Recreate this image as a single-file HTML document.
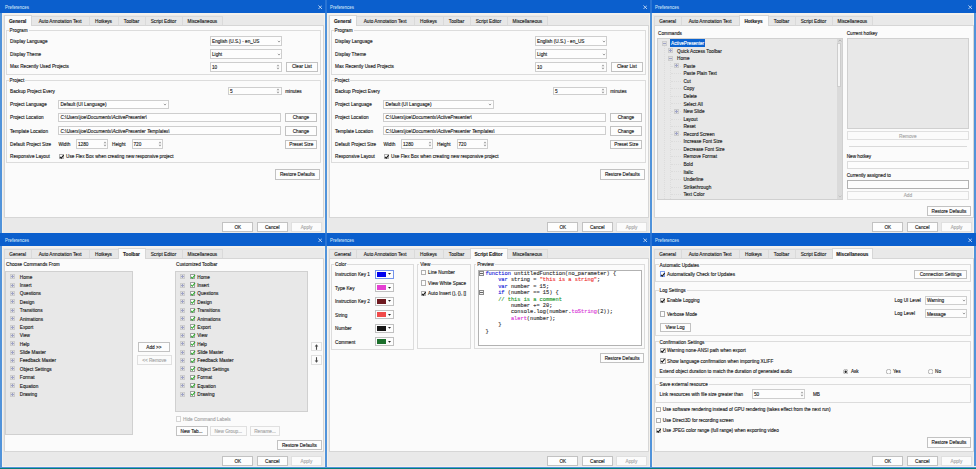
<!DOCTYPE html><html><head><meta charset="utf-8"><style>
html,body{margin:0;padding:0;width:976px;height:469px;overflow:hidden;background:#e9e9e9}
.a{position:absolute}
.t{position:absolute;white-space:nowrap;line-height:1;font-family:"Liberation Sans",sans-serif;-webkit-text-stroke:0.13px currentColor}
</style></head><body>
<div class="a" style="left:0px;top:0px;width:325px;height:233px;overflow:hidden;background:#e9e9e9">
<div class="a" style="left:0px;top:0px;width:2px;height:233px;background:#5193da;"></div>
<div class="a" style="left:2px;top:13px;width:1px;height:220px;background:#f4f1ec;"></div>
<div class="a" style="left:2px;top:13px;width:323px;height:2px;background:#f4f1ec;"></div>
<div class="a" style="left:324px;top:13px;width:1px;height:220px;background:#f4f1ec;"></div>
<div class="a" style="left:31px;top:16px;width:59px;height:10px;background:#e7e7e7;box-shadow:inset 0 0 0 1px #dadada;"></div>
<div class="t" style="top:19.66px;font-size:4.7px;color:#1e1e1e;left:10.149999999999999px;width:100px;text-align:center;">Auto Annotation Text</div>
<div class="a" style="left:89px;top:16px;width:30px;height:10px;background:#e7e7e7;box-shadow:inset 0 0 0 1px #dadada;"></div>
<div class="t" style="top:19.66px;font-size:4.7px;color:#1e1e1e;left:53.5px;width:100px;text-align:center;">Hotkeys</div>
<div class="a" style="left:118px;top:16px;width:28px;height:10px;background:#e7e7e7;box-shadow:inset 0 0 0 1px #dadada;"></div>
<div class="t" style="top:19.66px;font-size:4.7px;color:#1e1e1e;left:81.5px;width:100px;text-align:center;">Toolbar</div>
<div class="a" style="left:145px;top:16px;width:38px;height:10px;background:#e7e7e7;box-shadow:inset 0 0 0 1px #dadada;"></div>
<div class="t" style="top:19.66px;font-size:4.7px;color:#1e1e1e;left:113.5px;width:100px;text-align:center;">Script Editor</div>
<div class="a" style="left:182px;top:16px;width:41px;height:10px;background:#e7e7e7;box-shadow:inset 0 0 0 1px #dadada;"></div>
<div class="t" style="top:19.66px;font-size:4.7px;color:#1e1e1e;left:152.35px;width:100px;text-align:center;">Miscellaneous</div>
<div class="a" style="left:4px;top:25px;width:320px;height:193px;background:#fbfbfb;box-shadow:inset 0 0 0 1px #d6d6d6;"></div>
<div class="a" style="left:4px;top:15px;width:28px;height:11px;background:#fbfbfb;"></div>
<div class="a" style="left:4px;top:15px;width:27.8px;height:1px;background:#d6d6d6;"></div>
<div class="a" style="left:4px;top:15px;width:1px;height:11px;background:#d6d6d6;"></div>
<div class="a" style="left:30.8px;top:15px;width:1.0px;height:11px;background:#d6d6d6;"></div>
<div class="t" style="top:19.66px;font-size:4.7px;color:#1e1e1e;font-weight:bold;left:-32.35px;width:100px;text-align:center;">General</div>
<div class="a" style="left:222px;top:222px;width:31px;height:10px;background:#fdfdfd;box-shadow:inset 0 0 0 1px #c2c2c2;"></div>
<div class="t" style="top:225.76px;font-size:4.7px;color:#1e1e1e;left:187.8px;width:100px;text-align:center;">OK</div>
<div class="a" style="left:257px;top:222px;width:31px;height:10px;background:#fdfdfd;box-shadow:inset 0 0 0 1px #c2c2c2;"></div>
<div class="t" style="top:225.76px;font-size:4.7px;color:#1e1e1e;left:222.25px;width:100px;text-align:center;">Cancel</div>
<div class="a" style="left:291px;top:222px;width:31px;height:10px;background:#fbfbfb;box-shadow:inset 0 0 0 1px #e0e0e0;"></div>
<div class="t" style="top:225.76px;font-size:4.7px;color:#a8a8a8;left:256.6px;width:100px;text-align:center;">Apply</div>
<div class="a" style="left:0;top:0px;width:325px;height:233px">
<div class="a" style="left:6px;top:30px;width:315px;height:45px;box-shadow:inset 0 0 0 1px #dcdcdc;"></div>
<div class="t" style="left:8.6px;top:29.16px;font-size:4.7px;background:#fbfbfb;padding:0 1px;color:#1e1e1e">Program</div>
<div class="t" style="top:39.57px;font-size:4.7px;color:#1e1e1e;left:10px;">Display Language</div>
<div class="a" style="left:210px;top:36px;width:72px;height:10px;background:#fdfdfd;box-shadow:inset 0 0 0 1px #cecece;"></div>
<div class="t" style="top:39.66px;font-size:4.7px;color:#1e1e1e;left:212px;">English (U.S.) - en_US</div>
<svg class="a" style="left:276.6px;top:39.599999999999994px" width="4" height="3" viewBox="0 0 4 3"><path d="M0.9 0.8 L2 2.1 L3.1 0.8" stroke="#8c8c8c" stroke-width="0.8" fill="none"/></svg>
<div class="t" style="top:52.77px;font-size:4.7px;color:#1e1e1e;left:10px;">Display Theme</div>
<div class="a" style="left:210px;top:49px;width:72px;height:10px;background:#fdfdfd;box-shadow:inset 0 0 0 1px #cecece;"></div>
<div class="t" style="top:52.66px;font-size:4.7px;color:#1e1e1e;left:212px;">Light</div>
<svg class="a" style="left:276.6px;top:52.599999999999994px" width="4" height="3" viewBox="0 0 4 3"><path d="M0.9 0.8 L2 2.1 L3.1 0.8" stroke="#8c8c8c" stroke-width="0.8" fill="none"/></svg>
<div class="t" style="top:65.36px;font-size:4.7px;color:#1e1e1e;left:10px;">Max Recently Used Projects</div>
<div class="a" style="left:210px;top:62px;width:72px;height:10px;background:#fdfdfd;box-shadow:inset 0 0 0 1px #cecece;"></div>
<div class="t" style="top:65.62px;font-size:4.7px;color:#1e1e1e;left:212px;">10</div>
<svg class="a" style="left:276.4px;top:62.75px" width="4" height="8" viewBox="0 0 4 8"><path d="M0.6 3.3 L2 1.4 L3.4 3.3 Z M0.6 4.7 L2 6.6 L3.4 4.7 Z" fill="#9c9c9c"/></svg>
<div class="a" style="left:286px;top:62px;width:32px;height:10px;background:#fdfdfd;box-shadow:inset 0 0 0 1px #c2c2c2;"></div>
<div class="t" style="top:65.47px;font-size:4.7px;color:#1e1e1e;left:251.8px;width:100px;text-align:center;">Clear List</div>
<div class="a" style="left:6px;top:80px;width:315px;height:83px;box-shadow:inset 0 0 0 1px #dcdcdc;"></div>
<div class="t" style="left:8.6px;top:79.17px;font-size:4.7px;background:#fbfbfb;padding:0 1px;color:#1e1e1e">Project</div>
<div class="t" style="top:89.77px;font-size:4.7px;color:#1e1e1e;left:10px;">Backup Project Every</div>
<div class="a" style="left:228px;top:87px;width:54px;height:8px;background:#fdfdfd;box-shadow:inset 0 0 0 1px #cecece;"></div>
<div class="t" style="top:89.92px;font-size:4.7px;color:#1e1e1e;left:230px;">5</div>
<svg class="a" style="left:276.2px;top:87.05000000000001px" width="4" height="8" viewBox="0 0 4 8"><path d="M0.6 3.3 L2 1.4 L3.4 3.3 Z M0.6 4.7 L2 6.6 L3.4 4.7 Z" fill="#9c9c9c"/></svg>
<div class="t" style="top:89.87px;font-size:4.7px;color:#1e1e1e;left:285.2px;">minutes</div>
<div class="t" style="top:102.97px;font-size:4.7px;color:#1e1e1e;left:10px;">Project Language</div>
<div class="a" style="left:58px;top:100px;width:111px;height:9px;background:#fdfdfd;box-shadow:inset 0 0 0 1px #cecece;"></div>
<div class="t" style="top:103.07px;font-size:4.7px;color:#1e1e1e;left:60.4px;">Default (UI Language)</div>
<svg class="a" style="left:163.1px;top:103.0px" width="4" height="3" viewBox="0 0 4 3"><path d="M0.9 0.8 L2 2.1 L3.1 0.8" stroke="#8c8c8c" stroke-width="0.8" fill="none"/></svg>
<div class="t" style="top:116.17px;font-size:4.7px;color:#1e1e1e;left:10px;">Project Location</div>
<div class="a" style="left:58px;top:113px;width:223px;height:9px;background:#fdfdfd;box-shadow:inset 0 0 0 1px #cecece;"></div>
<div class="t" style="top:115.87px;font-size:4.7px;color:#1e1e1e;left:60.4px;font-style:italic">C:\Users\joe\Documents\ActivePresenter\</div>
<div class="a" style="left:285px;top:113px;width:32px;height:9px;background:#fdfdfd;box-shadow:inset 0 0 0 1px #c2c2c2;"></div>
<div class="t" style="top:116.06px;font-size:4.7px;color:#1e1e1e;left:250.95px;width:100px;text-align:center;">Change</div>
<div class="t" style="top:129.66px;font-size:4.7px;color:#1e1e1e;left:10px;">Template Location</div>
<div class="a" style="left:58px;top:126px;width:223px;height:9px;background:#fdfdfd;box-shadow:inset 0 0 0 1px #cecece;"></div>
<div class="t" style="top:129.76px;font-size:4.7px;color:#1e1e1e;left:60.4px;font-style:italic">C:\Users\joe\Documents\ActivePresenter Templates\</div>
<div class="a" style="left:285px;top:126px;width:32px;height:10px;background:#fdfdfd;box-shadow:inset 0 0 0 1px #c2c2c2;"></div>
<div class="t" style="top:129.71px;font-size:4.7px;color:#1e1e1e;left:250.95px;width:100px;text-align:center;">Change</div>
<div class="t" style="top:143.06px;font-size:4.7px;color:#1e1e1e;left:10px;">Default Project Size</div>
<div class="t" style="top:143.06px;font-size:4.7px;color:#1e1e1e;left:58.4px;">Width</div>
<div class="a" style="left:76px;top:139px;width:32px;height:10px;background:#fdfdfd;box-shadow:inset 0 0 0 1px #cecece;"></div>
<div class="t" style="top:143.01px;font-size:4.7px;color:#1e1e1e;left:78px;">1280</div>
<svg class="a" style="left:102.7px;top:140.15px" width="4" height="8" viewBox="0 0 4 8"><path d="M0.6 3.3 L2 1.4 L3.4 3.3 Z M0.6 4.7 L2 6.6 L3.4 4.7 Z" fill="#9c9c9c"/></svg>
<div class="t" style="top:143.06px;font-size:4.7px;color:#1e1e1e;left:112px;">Height</div>
<div class="a" style="left:132px;top:139px;width:31px;height:10px;background:#fdfdfd;box-shadow:inset 0 0 0 1px #cecece;"></div>
<div class="t" style="top:143.01px;font-size:4.7px;color:#1e1e1e;left:133.5px;">720</div>
<svg class="a" style="left:157.8px;top:140.15px" width="4" height="8" viewBox="0 0 4 8"><path d="M0.6 3.3 L2 1.4 L3.4 3.3 Z M0.6 4.7 L2 6.6 L3.4 4.7 Z" fill="#9c9c9c"/></svg>
<div class="a" style="left:285px;top:140px;width:32px;height:9px;background:#fdfdfd;box-shadow:inset 0 0 0 1px #c2c2c2;"></div>
<div class="t" style="top:143.36px;font-size:4.7px;color:#1e1e1e;left:251.25px;width:100px;text-align:center;">Preset Size</div>
<div class="t" style="top:155.26px;font-size:4.7px;color:#1e1e1e;left:10px;">Responsive Layout</div>
<div class="a" style="left:59px;top:154px;width:5px;height:5px;background:#fdfdfd;box-shadow:inset 0 0 0 1px #b0b0b0;"></div>
<svg class="a" style="left:58.6px;top:153.70000000000002px;overflow:visible" width="5.4" height="5.4" viewBox="0 0 10 10"><path d="M1.8 5.2 L4.2 7.8 L8.6 2.2" stroke="#1a1a1a" stroke-width="2.0" fill="none"/></svg>
<div class="t" style="top:155.26px;font-size:4.7px;color:#1e1e1e;left:66px;">Use Flex Box when creating new responsive project</div>
<div class="a" style="left:275px;top:169px;width:45px;height:11px;background:#fdfdfd;box-shadow:inset 0 0 0 1px #c2c2c2;"></div>
<div class="t" style="top:173.26px;font-size:4.7px;color:#1e1e1e;left:247.35000000000002px;width:100px;text-align:center;">Restore Defaults</div>
</div>
<div class="a" style="left:0px;top:0px;width:325px;height:13px;background:#0b5fcd;"></div>
<div class="t" style="top:6.00px;font-size:4.45px;color:#cfe1f7;left:5px;-webkit-text-stroke:0.05px currentColor">Preferences</div>
<svg class="a" style="left:317.5px;top:4.8px" width="4.5" height="4.5" viewBox="0 0 10 10"><path d="M1 1 L9 9 M9 1 L1 9" stroke="#e4edf9" stroke-width="1.7"/></svg>
</div>
<div class="a" style="left:325px;top:0px;width:325px;height:233px;overflow:hidden;background:#e9e9e9">
<div class="a" style="left:0px;top:0px;width:2px;height:233px;background:#5193da;"></div>
<div class="a" style="left:2px;top:13px;width:1px;height:220px;background:#f4f1ec;"></div>
<div class="a" style="left:2px;top:13px;width:323px;height:2px;background:#f4f1ec;"></div>
<div class="a" style="left:324px;top:13px;width:1px;height:220px;background:#f4f1ec;"></div>
<div class="a" style="left:31px;top:16px;width:59px;height:10px;background:#e7e7e7;box-shadow:inset 0 0 0 1px #dadada;"></div>
<div class="t" style="top:19.66px;font-size:4.7px;color:#1e1e1e;left:10.149999999999999px;width:100px;text-align:center;">Auto Annotation Text</div>
<div class="a" style="left:89px;top:16px;width:30px;height:10px;background:#e7e7e7;box-shadow:inset 0 0 0 1px #dadada;"></div>
<div class="t" style="top:19.66px;font-size:4.7px;color:#1e1e1e;left:53.5px;width:100px;text-align:center;">Hotkeys</div>
<div class="a" style="left:118px;top:16px;width:28px;height:10px;background:#e7e7e7;box-shadow:inset 0 0 0 1px #dadada;"></div>
<div class="t" style="top:19.66px;font-size:4.7px;color:#1e1e1e;left:81.5px;width:100px;text-align:center;">Toolbar</div>
<div class="a" style="left:145px;top:16px;width:38px;height:10px;background:#e7e7e7;box-shadow:inset 0 0 0 1px #dadada;"></div>
<div class="t" style="top:19.66px;font-size:4.7px;color:#1e1e1e;left:113.5px;width:100px;text-align:center;">Script Editor</div>
<div class="a" style="left:182px;top:16px;width:41px;height:10px;background:#e7e7e7;box-shadow:inset 0 0 0 1px #dadada;"></div>
<div class="t" style="top:19.66px;font-size:4.7px;color:#1e1e1e;left:152.35px;width:100px;text-align:center;">Miscellaneous</div>
<div class="a" style="left:4px;top:25px;width:320px;height:193px;background:#fbfbfb;box-shadow:inset 0 0 0 1px #d6d6d6;"></div>
<div class="a" style="left:4px;top:15px;width:28px;height:11px;background:#fbfbfb;"></div>
<div class="a" style="left:4px;top:15px;width:27.8px;height:1px;background:#d6d6d6;"></div>
<div class="a" style="left:4px;top:15px;width:1px;height:11px;background:#d6d6d6;"></div>
<div class="a" style="left:30.8px;top:15px;width:1.0px;height:11px;background:#d6d6d6;"></div>
<div class="t" style="top:19.66px;font-size:4.7px;color:#1e1e1e;font-weight:bold;left:-32.35px;width:100px;text-align:center;">General</div>
<div class="a" style="left:222px;top:222px;width:31px;height:10px;background:#fdfdfd;box-shadow:inset 0 0 0 1px #c2c2c2;"></div>
<div class="t" style="top:225.76px;font-size:4.7px;color:#1e1e1e;left:187.8px;width:100px;text-align:center;">OK</div>
<div class="a" style="left:257px;top:222px;width:31px;height:10px;background:#fdfdfd;box-shadow:inset 0 0 0 1px #c2c2c2;"></div>
<div class="t" style="top:225.76px;font-size:4.7px;color:#1e1e1e;left:222.25px;width:100px;text-align:center;">Cancel</div>
<div class="a" style="left:291px;top:222px;width:31px;height:10px;background:#fbfbfb;box-shadow:inset 0 0 0 1px #e0e0e0;"></div>
<div class="t" style="top:225.76px;font-size:4.7px;color:#a8a8a8;left:256.6px;width:100px;text-align:center;">Apply</div>
<div class="a" style="left:0;top:0px;width:325px;height:233px">
<div class="a" style="left:6px;top:30px;width:315px;height:45px;box-shadow:inset 0 0 0 1px #dcdcdc;"></div>
<div class="t" style="left:8.6px;top:29.16px;font-size:4.7px;background:#fbfbfb;padding:0 1px;color:#1e1e1e">Program</div>
<div class="t" style="top:39.57px;font-size:4.7px;color:#1e1e1e;left:10px;">Display Language</div>
<div class="a" style="left:210px;top:36px;width:72px;height:10px;background:#fdfdfd;box-shadow:inset 0 0 0 1px #cecece;"></div>
<div class="t" style="top:39.66px;font-size:4.7px;color:#1e1e1e;left:212px;">English (U.S.) - en_US</div>
<svg class="a" style="left:276.6px;top:39.599999999999994px" width="4" height="3" viewBox="0 0 4 3"><path d="M0.9 0.8 L2 2.1 L3.1 0.8" stroke="#8c8c8c" stroke-width="0.8" fill="none"/></svg>
<div class="t" style="top:52.77px;font-size:4.7px;color:#1e1e1e;left:10px;">Display Theme</div>
<div class="a" style="left:210px;top:49px;width:72px;height:10px;background:#fdfdfd;box-shadow:inset 0 0 0 1px #cecece;"></div>
<div class="t" style="top:52.66px;font-size:4.7px;color:#1e1e1e;left:212px;">Light</div>
<svg class="a" style="left:276.6px;top:52.599999999999994px" width="4" height="3" viewBox="0 0 4 3"><path d="M0.9 0.8 L2 2.1 L3.1 0.8" stroke="#8c8c8c" stroke-width="0.8" fill="none"/></svg>
<div class="t" style="top:65.36px;font-size:4.7px;color:#1e1e1e;left:10px;">Max Recently Used Projects</div>
<div class="a" style="left:210px;top:62px;width:72px;height:10px;background:#fdfdfd;box-shadow:inset 0 0 0 1px #cecece;"></div>
<div class="t" style="top:65.62px;font-size:4.7px;color:#1e1e1e;left:212px;">10</div>
<svg class="a" style="left:276.4px;top:62.75px" width="4" height="8" viewBox="0 0 4 8"><path d="M0.6 3.3 L2 1.4 L3.4 3.3 Z M0.6 4.7 L2 6.6 L3.4 4.7 Z" fill="#9c9c9c"/></svg>
<div class="a" style="left:286px;top:62px;width:32px;height:10px;background:#fdfdfd;box-shadow:inset 0 0 0 1px #c2c2c2;"></div>
<div class="t" style="top:65.47px;font-size:4.7px;color:#1e1e1e;left:251.8px;width:100px;text-align:center;">Clear List</div>
<div class="a" style="left:6px;top:80px;width:315px;height:83px;box-shadow:inset 0 0 0 1px #dcdcdc;"></div>
<div class="t" style="left:8.6px;top:79.17px;font-size:4.7px;background:#fbfbfb;padding:0 1px;color:#1e1e1e">Project</div>
<div class="t" style="top:89.77px;font-size:4.7px;color:#1e1e1e;left:10px;">Backup Project Every</div>
<div class="a" style="left:228px;top:87px;width:54px;height:8px;background:#fdfdfd;box-shadow:inset 0 0 0 1px #cecece;"></div>
<div class="t" style="top:89.92px;font-size:4.7px;color:#1e1e1e;left:230px;">5</div>
<svg class="a" style="left:276.2px;top:87.05000000000001px" width="4" height="8" viewBox="0 0 4 8"><path d="M0.6 3.3 L2 1.4 L3.4 3.3 Z M0.6 4.7 L2 6.6 L3.4 4.7 Z" fill="#9c9c9c"/></svg>
<div class="t" style="top:89.87px;font-size:4.7px;color:#1e1e1e;left:285.2px;">minutes</div>
<div class="t" style="top:102.97px;font-size:4.7px;color:#1e1e1e;left:10px;">Project Language</div>
<div class="a" style="left:58px;top:100px;width:111px;height:9px;background:#fdfdfd;box-shadow:inset 0 0 0 1px #cecece;"></div>
<div class="t" style="top:103.07px;font-size:4.7px;color:#1e1e1e;left:60.4px;">Default (UI Language)</div>
<svg class="a" style="left:163.1px;top:103.0px" width="4" height="3" viewBox="0 0 4 3"><path d="M0.9 0.8 L2 2.1 L3.1 0.8" stroke="#8c8c8c" stroke-width="0.8" fill="none"/></svg>
<div class="t" style="top:116.17px;font-size:4.7px;color:#1e1e1e;left:10px;">Project Location</div>
<div class="a" style="left:58px;top:113px;width:223px;height:9px;background:#fdfdfd;box-shadow:inset 0 0 0 1px #cecece;"></div>
<div class="t" style="top:115.87px;font-size:4.7px;color:#1e1e1e;left:60.4px;font-style:italic">C:\Users\joe\Documents\ActivePresenter\</div>
<div class="a" style="left:285px;top:113px;width:32px;height:9px;background:#fdfdfd;box-shadow:inset 0 0 0 1px #c2c2c2;"></div>
<div class="t" style="top:116.06px;font-size:4.7px;color:#1e1e1e;left:250.95px;width:100px;text-align:center;">Change</div>
<div class="t" style="top:129.66px;font-size:4.7px;color:#1e1e1e;left:10px;">Template Location</div>
<div class="a" style="left:58px;top:126px;width:223px;height:9px;background:#fdfdfd;box-shadow:inset 0 0 0 1px #cecece;"></div>
<div class="t" style="top:129.76px;font-size:4.7px;color:#1e1e1e;left:60.4px;font-style:italic">C:\Users\joe\Documents\ActivePresenter Templates\</div>
<div class="a" style="left:285px;top:126px;width:32px;height:10px;background:#fdfdfd;box-shadow:inset 0 0 0 1px #c2c2c2;"></div>
<div class="t" style="top:129.71px;font-size:4.7px;color:#1e1e1e;left:250.95px;width:100px;text-align:center;">Change</div>
<div class="t" style="top:143.06px;font-size:4.7px;color:#1e1e1e;left:10px;">Default Project Size</div>
<div class="t" style="top:143.06px;font-size:4.7px;color:#1e1e1e;left:58.4px;">Width</div>
<div class="a" style="left:76px;top:139px;width:32px;height:10px;background:#fdfdfd;box-shadow:inset 0 0 0 1px #cecece;"></div>
<div class="t" style="top:143.01px;font-size:4.7px;color:#1e1e1e;left:78px;">1280</div>
<svg class="a" style="left:102.7px;top:140.15px" width="4" height="8" viewBox="0 0 4 8"><path d="M0.6 3.3 L2 1.4 L3.4 3.3 Z M0.6 4.7 L2 6.6 L3.4 4.7 Z" fill="#9c9c9c"/></svg>
<div class="t" style="top:143.06px;font-size:4.7px;color:#1e1e1e;left:112px;">Height</div>
<div class="a" style="left:132px;top:139px;width:31px;height:10px;background:#fdfdfd;box-shadow:inset 0 0 0 1px #cecece;"></div>
<div class="t" style="top:143.01px;font-size:4.7px;color:#1e1e1e;left:133.5px;">720</div>
<svg class="a" style="left:157.8px;top:140.15px" width="4" height="8" viewBox="0 0 4 8"><path d="M0.6 3.3 L2 1.4 L3.4 3.3 Z M0.6 4.7 L2 6.6 L3.4 4.7 Z" fill="#9c9c9c"/></svg>
<div class="a" style="left:285px;top:140px;width:32px;height:9px;background:#fdfdfd;box-shadow:inset 0 0 0 1px #c2c2c2;"></div>
<div class="t" style="top:143.36px;font-size:4.7px;color:#1e1e1e;left:251.25px;width:100px;text-align:center;">Preset Size</div>
<div class="t" style="top:155.26px;font-size:4.7px;color:#1e1e1e;left:10px;">Responsive Layout</div>
<div class="a" style="left:59px;top:154px;width:5px;height:5px;background:#fdfdfd;box-shadow:inset 0 0 0 1px #b0b0b0;"></div>
<svg class="a" style="left:58.6px;top:153.70000000000002px;overflow:visible" width="5.4" height="5.4" viewBox="0 0 10 10"><path d="M1.8 5.2 L4.2 7.8 L8.6 2.2" stroke="#1a1a1a" stroke-width="2.0" fill="none"/></svg>
<div class="t" style="top:155.26px;font-size:4.7px;color:#1e1e1e;left:66px;">Use Flex Box when creating new responsive project</div>
<div class="a" style="left:275px;top:169px;width:45px;height:11px;background:#fdfdfd;box-shadow:inset 0 0 0 1px #c2c2c2;"></div>
<div class="t" style="top:173.26px;font-size:4.7px;color:#1e1e1e;left:247.35000000000002px;width:100px;text-align:center;">Restore Defaults</div>
</div>
<div class="a" style="left:0px;top:0px;width:325px;height:13px;background:#0b5fcd;"></div>
<div class="a" style="left:0px;top:0px;width:2px;height:13px;background:#2a74d4;"></div>
<div class="t" style="top:6.00px;font-size:4.45px;color:#cfe1f7;left:5px;-webkit-text-stroke:0.05px currentColor">Preferences</div>
<svg class="a" style="left:317.5px;top:4.8px" width="4.5" height="4.5" viewBox="0 0 10 10"><path d="M1 1 L9 9 M9 1 L1 9" stroke="#e4edf9" stroke-width="1.7"/></svg>
</div>
<div class="a" style="left:650px;top:0px;width:326px;height:233px;overflow:hidden;background:#e9e9e9">
<div class="a" style="left:0px;top:0px;width:2px;height:233px;background:#5193da;"></div>
<div class="a" style="left:2px;top:13px;width:1px;height:220px;background:#f4f1ec;"></div>
<div class="a" style="left:2px;top:13px;width:324px;height:2px;background:#f4f1ec;"></div>
<div class="a" style="left:325px;top:13px;width:1px;height:220px;background:#f4f1ec;"></div>
<div class="a" style="left:324px;top:0px;width:2px;height:233px;background:#5193da;"></div>
<div class="a" style="left:323px;top:13px;width:1px;height:220px;background:#f4f1ec;"></div>
<div class="a" style="left:4px;top:16px;width:28px;height:10px;background:#e7e7e7;box-shadow:inset 0 0 0 1px #dadada;"></div>
<div class="t" style="top:19.66px;font-size:4.7px;color:#1e1e1e;left:-32.35px;width:100px;text-align:center;">General</div>
<div class="a" style="left:31px;top:16px;width:59px;height:10px;background:#e7e7e7;box-shadow:inset 0 0 0 1px #dadada;"></div>
<div class="t" style="top:19.66px;font-size:4.7px;color:#1e1e1e;left:10.149999999999999px;width:100px;text-align:center;">Auto Annotation Text</div>
<div class="a" style="left:118px;top:16px;width:28px;height:10px;background:#e7e7e7;box-shadow:inset 0 0 0 1px #dadada;"></div>
<div class="t" style="top:19.66px;font-size:4.7px;color:#1e1e1e;left:81.5px;width:100px;text-align:center;">Toolbar</div>
<div class="a" style="left:145px;top:16px;width:38px;height:10px;background:#e7e7e7;box-shadow:inset 0 0 0 1px #dadada;"></div>
<div class="t" style="top:19.66px;font-size:4.7px;color:#1e1e1e;left:113.5px;width:100px;text-align:center;">Script Editor</div>
<div class="a" style="left:182px;top:16px;width:41px;height:10px;background:#e7e7e7;box-shadow:inset 0 0 0 1px #dadada;"></div>
<div class="t" style="top:19.66px;font-size:4.7px;color:#1e1e1e;left:152.35px;width:100px;text-align:center;">Miscellaneous</div>
<div class="a" style="left:4px;top:25px;width:320px;height:193px;background:#fbfbfb;box-shadow:inset 0 0 0 1px #d6d6d6;"></div>
<div class="a" style="left:89px;top:15px;width:30px;height:11px;background:#fbfbfb;"></div>
<div class="a" style="left:89px;top:15px;width:29.5px;height:1px;background:#d6d6d6;"></div>
<div class="a" style="left:89px;top:15px;width:1px;height:11px;background:#d6d6d6;"></div>
<div class="a" style="left:117.5px;top:15px;width:1.0px;height:11px;background:#d6d6d6;"></div>
<div class="t" style="top:19.66px;font-size:4.7px;color:#1e1e1e;font-weight:bold;left:53.5px;width:100px;text-align:center;">Hotkeys</div>
<div class="a" style="left:222px;top:222px;width:31px;height:10px;background:#fdfdfd;box-shadow:inset 0 0 0 1px #c2c2c2;"></div>
<div class="t" style="top:225.76px;font-size:4.7px;color:#1e1e1e;left:187.8px;width:100px;text-align:center;">OK</div>
<div class="a" style="left:257px;top:222px;width:31px;height:10px;background:#fdfdfd;box-shadow:inset 0 0 0 1px #c2c2c2;"></div>
<div class="t" style="top:225.76px;font-size:4.7px;color:#1e1e1e;left:222.25px;width:100px;text-align:center;">Cancel</div>
<div class="a" style="left:291px;top:222px;width:31px;height:10px;background:#fbfbfb;box-shadow:inset 0 0 0 1px #e0e0e0;"></div>
<div class="t" style="top:225.76px;font-size:4.7px;color:#a8a8a8;left:256.6px;width:100px;text-align:center;">Apply</div>
<div class="a" style="left:0;top:0px;width:326px;height:233px">
<div class="t" style="top:31.66px;font-size:4.7px;color:#1e1e1e;left:8px;">Commands</div>
<div class="a" style="left:7px;top:38px;width:186px;height:162px;background:#e8e8e8;box-shadow:inset 0 0 0 1px #d0d0d0;"></div>
<div class="a" style="left:14px;top:45px;width:0;height:154px;border-left:1px dotted #dcdcdc"></div>
<div class="a" style="left:20px;top:60px;width:0;height:139px;border-left:1px dotted #dcdcdc"></div>
<div class="a" style="left:21px;top:66px;width:10px;height:0;border-top:1px dotted #dcdcdc"></div>
<div class="a" style="left:21px;top:73px;width:10px;height:0;border-top:1px dotted #dcdcdc"></div>
<div class="a" style="left:21px;top:81px;width:10px;height:0;border-top:1px dotted #dcdcdc"></div>
<div class="a" style="left:21px;top:88px;width:10px;height:0;border-top:1px dotted #dcdcdc"></div>
<div class="a" style="left:21px;top:96px;width:10px;height:0;border-top:1px dotted #dcdcdc"></div>
<div class="a" style="left:21px;top:103px;width:10px;height:0;border-top:1px dotted #dcdcdc"></div>
<div class="a" style="left:21px;top:111px;width:10px;height:0;border-top:1px dotted #dcdcdc"></div>
<div class="a" style="left:21px;top:119px;width:10px;height:0;border-top:1px dotted #dcdcdc"></div>
<div class="a" style="left:21px;top:126px;width:10px;height:0;border-top:1px dotted #dcdcdc"></div>
<div class="a" style="left:21px;top:134px;width:10px;height:0;border-top:1px dotted #dcdcdc"></div>
<div class="a" style="left:21px;top:141px;width:10px;height:0;border-top:1px dotted #dcdcdc"></div>
<div class="a" style="left:21px;top:149px;width:10px;height:0;border-top:1px dotted #dcdcdc"></div>
<div class="a" style="left:21px;top:156px;width:10px;height:0;border-top:1px dotted #dcdcdc"></div>
<div class="a" style="left:21px;top:164px;width:10px;height:0;border-top:1px dotted #dcdcdc"></div>
<div class="a" style="left:21px;top:171px;width:10px;height:0;border-top:1px dotted #dcdcdc"></div>
<div class="a" style="left:21px;top:179px;width:10px;height:0;border-top:1px dotted #dcdcdc"></div>
<div class="a" style="left:21px;top:187px;width:10px;height:0;border-top:1px dotted #dcdcdc"></div>
<div class="a" style="left:21px;top:194px;width:10px;height:0;border-top:1px dotted #dcdcdc"></div>
<div class="a" style="left:187px;top:39px;width:5px;height:160px;background:#dadada;"></div>
<div class="a" style="left:187px;top:43px;width:4px;height:44px;background:#f6f6f6;box-shadow:inset 0 0 0 1px #cdcdcd;"></div>
<svg class="a" style="left:187.5px;top:39px" width="4" height="3" viewBox="0 0 4 3"><path d="M0.6 2.4 L2 0.9 L3.4 2.4" stroke="#9a9a9a" stroke-width="0.6" fill="none"/></svg>
<svg class="a" style="left:187.5px;top:195px" width="4" height="3" viewBox="0 0 4 3"><path d="M0.6 0.6 L2 2.1 L3.4 0.6" stroke="#b0b0b0" stroke-width="0.6" fill="none"/></svg>
<div class="a" style="left:12px;top:41px;width:5px;height:5px;background:#e0e0e0;box-shadow:inset 0 0 0 1px #cdcdcd"></div>
<div class="a" style="left:13px;top:43px;width:3px;height:1px;background:#9fa3c6"></div>
<div class="a" style="left:20px;top:39px;width:35px;height:8px;background:#0b63d0;"></div>
<div class="t" style="top:42.07px;font-size:4.7px;color:#ffffff;left:21.1px;">ActivePresenter</div>
<div class="a" style="left:18px;top:48px;width:5px;height:5px;background:#e0e0e0;box-shadow:inset 0 0 0 1px #cdcdcd"></div>
<div class="a" style="left:19px;top:50px;width:3px;height:1px;background:#9fa3c6"></div>
<div class="a" style="left:20px;top:49px;width:1px;height:3px;background:#9fa3c6"></div>
<div class="t" style="top:49.63px;font-size:4.7px;color:#1e1e1e;left:27.0px;">Quick Access Toolbar</div>
<div class="a" style="left:18px;top:56px;width:5px;height:5px;background:#e0e0e0;box-shadow:inset 0 0 0 1px #cdcdcd"></div>
<div class="a" style="left:19px;top:58px;width:3px;height:1px;background:#9fa3c6"></div>
<div class="t" style="top:57.19px;font-size:4.7px;color:#1e1e1e;left:27.0px;">Home</div>
<div class="a" style="left:24px;top:63px;width:5px;height:5px;background:#e0e0e0;box-shadow:inset 0 0 0 1px #cdcdcd"></div>
<div class="a" style="left:25px;top:65px;width:3px;height:1px;background:#9fa3c6"></div>
<div class="a" style="left:26px;top:64px;width:1px;height:3px;background:#9fa3c6"></div>
<div class="t" style="top:64.74px;font-size:4.7px;color:#1e1e1e;left:33.400000000000006px;">Paste</div>
<div class="t" style="top:72.31px;font-size:4.7px;color:#1e1e1e;left:33.400000000000006px;">Paste Plain Text</div>
<div class="t" style="top:79.87px;font-size:4.7px;color:#1e1e1e;left:33.400000000000006px;">Cut</div>
<div class="t" style="top:87.43px;font-size:4.7px;color:#1e1e1e;left:33.400000000000006px;">Copy</div>
<div class="t" style="top:94.99px;font-size:4.7px;color:#1e1e1e;left:33.400000000000006px;">Delete</div>
<div class="t" style="top:102.55px;font-size:4.7px;color:#1e1e1e;left:33.400000000000006px;">Select All</div>
<div class="a" style="left:24px;top:109px;width:5px;height:5px;background:#e0e0e0;box-shadow:inset 0 0 0 1px #cdcdcd"></div>
<div class="a" style="left:25px;top:111px;width:3px;height:1px;background:#9fa3c6"></div>
<div class="a" style="left:26px;top:110px;width:1px;height:3px;background:#9fa3c6"></div>
<div class="t" style="top:110.11px;font-size:4.7px;color:#1e1e1e;left:33.400000000000006px;">New Slide</div>
<div class="t" style="top:117.67px;font-size:4.7px;color:#1e1e1e;left:33.400000000000006px;">Layout</div>
<div class="t" style="top:125.23px;font-size:4.7px;color:#1e1e1e;left:33.400000000000006px;">Reset</div>
<div class="a" style="left:24px;top:131px;width:5px;height:5px;background:#e0e0e0;box-shadow:inset 0 0 0 1px #cdcdcd"></div>
<div class="a" style="left:25px;top:133px;width:3px;height:1px;background:#9fa3c6"></div>
<div class="a" style="left:26px;top:132px;width:1px;height:3px;background:#9fa3c6"></div>
<div class="t" style="top:132.78px;font-size:4.7px;color:#1e1e1e;left:33.400000000000006px;">Record Screen</div>
<div class="t" style="top:140.34px;font-size:4.7px;color:#1e1e1e;left:33.400000000000006px;">Increase Font Size</div>
<div class="t" style="top:147.90px;font-size:4.7px;color:#1e1e1e;left:33.400000000000006px;">Decrease Font Size</div>
<div class="t" style="top:155.46px;font-size:4.7px;color:#1e1e1e;left:33.400000000000006px;">Remove Format</div>
<div class="t" style="top:163.02px;font-size:4.7px;color:#1e1e1e;left:33.400000000000006px;">Bold</div>
<div class="t" style="top:170.58px;font-size:4.7px;color:#1e1e1e;left:33.400000000000006px;">Italic</div>
<div class="t" style="top:178.14px;font-size:4.7px;color:#1e1e1e;left:33.400000000000006px;">Underline</div>
<div class="t" style="top:185.70px;font-size:4.7px;color:#1e1e1e;left:33.400000000000006px;">Strikethrough</div>
<div class="t" style="top:193.26px;font-size:4.7px;color:#1e1e1e;left:33.400000000000006px;">Text Color</div>
<div class="t" style="top:31.66px;font-size:4.7px;color:#1e1e1e;left:196.7px;">Current hotkey</div>
<div class="a" style="left:197px;top:38px;width:122px;height:91px;background:#e8e8e8;box-shadow:inset 0 0 0 1px #d0d0d0;"></div>
<div class="a" style="left:197px;top:131px;width:122px;height:9px;background:#fbfbfb;box-shadow:inset 0 0 0 1px #e0e0e0;"></div>
<div class="t" style="top:134.56px;font-size:4.7px;color:#a8a8a8;left:207.85000000000002px;width:100px;text-align:center;">Remove</div>
<div class="a" style="left:198.6px;top:146px;width:118.4px;height:1px;background:#dadada;"></div>
<div class="t" style="top:155.16px;font-size:4.7px;color:#1e1e1e;left:196.7px;">New hotkey</div>
<div class="a" style="left:197px;top:161px;width:122px;height:8px;background:#fdfdfd;box-shadow:inset 0 0 0 1px #dcdcdc;"></div>
<div class="t" style="top:173.96px;font-size:4.7px;color:#1e1e1e;left:196.7px;">Currently assigned to</div>
<div class="a" style="left:197px;top:180px;width:122px;height:9px;background:#fdfdfd;box-shadow:inset 0 0 0 1px #b2b2b2;"></div>
<div class="a" style="left:197px;top:191px;width:122px;height:9px;background:#fbfbfb;box-shadow:inset 0 0 0 1px #e0e0e0;"></div>
<div class="t" style="top:194.11px;font-size:4.7px;color:#a8a8a8;left:207.85000000000002px;width:100px;text-align:center;">Add</div>
<div class="a" style="left:277px;top:206px;width:44px;height:10px;background:#fdfdfd;box-shadow:inset 0 0 0 1px #c2c2c2;"></div>
<div class="t" style="top:209.86px;font-size:4.7px;color:#1e1e1e;left:249.0px;width:100px;text-align:center;">Restore Defaults</div>
</div>
<div class="a" style="left:0px;top:0px;width:326px;height:13px;background:#0b5fcd;"></div>
<div class="a" style="left:0px;top:0px;width:2px;height:13px;background:#2a74d4;"></div>
<div class="t" style="top:6.00px;font-size:4.45px;color:#cfe1f7;left:5px;-webkit-text-stroke:0.05px currentColor">Preferences</div>
<svg class="a" style="left:317.5px;top:4.8px" width="4.5" height="4.5" viewBox="0 0 10 10"><path d="M1 1 L9 9 M9 1 L1 9" stroke="#e4edf9" stroke-width="1.7"/></svg>
</div>
<div class="a" style="left:0px;top:233px;width:325px;height:236px;overflow:hidden;background:#e9e9e9">
<div class="a" style="left:0px;top:0px;width:2px;height:236px;background:#5193da;"></div>
<div class="a" style="left:2px;top:13px;width:1px;height:223px;background:#f4f1ec;"></div>
<div class="a" style="left:2px;top:13px;width:323px;height:2px;background:#f4f1ec;"></div>
<div class="a" style="left:324px;top:13px;width:1px;height:223px;background:#f4f1ec;"></div>
<div class="a" style="left:2px;top:233px;width:323px;height:1px;background:#f4f1ec;"></div>
<div class="a" style="left:4px;top:16px;width:28px;height:10px;background:#e7e7e7;box-shadow:inset 0 0 0 1px #dadada;"></div>
<div class="t" style="top:19.66px;font-size:4.7px;color:#1e1e1e;left:-32.35px;width:100px;text-align:center;">General</div>
<div class="a" style="left:31px;top:16px;width:59px;height:10px;background:#e7e7e7;box-shadow:inset 0 0 0 1px #dadada;"></div>
<div class="t" style="top:19.66px;font-size:4.7px;color:#1e1e1e;left:10.149999999999999px;width:100px;text-align:center;">Auto Annotation Text</div>
<div class="a" style="left:89px;top:16px;width:30px;height:10px;background:#e7e7e7;box-shadow:inset 0 0 0 1px #dadada;"></div>
<div class="t" style="top:19.66px;font-size:4.7px;color:#1e1e1e;left:53.5px;width:100px;text-align:center;">Hotkeys</div>
<div class="a" style="left:145px;top:16px;width:38px;height:10px;background:#e7e7e7;box-shadow:inset 0 0 0 1px #dadada;"></div>
<div class="t" style="top:19.66px;font-size:4.7px;color:#1e1e1e;left:113.5px;width:100px;text-align:center;">Script Editor</div>
<div class="a" style="left:182px;top:16px;width:41px;height:10px;background:#e7e7e7;box-shadow:inset 0 0 0 1px #dadada;"></div>
<div class="t" style="top:19.66px;font-size:4.7px;color:#1e1e1e;left:152.35px;width:100px;text-align:center;">Miscellaneous</div>
<div class="a" style="left:4px;top:25px;width:320px;height:194px;background:#fbfbfb;box-shadow:inset 0 0 0 1px #d6d6d6;"></div>
<div class="a" style="left:118px;top:15px;width:28px;height:11px;background:#fbfbfb;"></div>
<div class="a" style="left:118px;top:15px;width:27.5px;height:1px;background:#d6d6d6;"></div>
<div class="a" style="left:118px;top:15px;width:1px;height:11px;background:#d6d6d6;"></div>
<div class="a" style="left:144.5px;top:15px;width:1.0px;height:11px;background:#d6d6d6;"></div>
<div class="t" style="top:19.66px;font-size:4.7px;color:#1e1e1e;font-weight:bold;left:81.5px;width:100px;text-align:center;">Toolbar</div>
<div class="a" style="left:222px;top:223px;width:31px;height:10px;background:#fdfdfd;box-shadow:inset 0 0 0 1px #c2c2c2;"></div>
<div class="t" style="top:226.71px;font-size:4.7px;color:#1e1e1e;left:187.8px;width:100px;text-align:center;">OK</div>
<div class="a" style="left:257px;top:223px;width:31px;height:10px;background:#fdfdfd;box-shadow:inset 0 0 0 1px #c2c2c2;"></div>
<div class="t" style="top:226.71px;font-size:4.7px;color:#1e1e1e;left:222.35000000000002px;width:100px;text-align:center;">Cancel</div>
<div class="a" style="left:291px;top:223px;width:31px;height:10px;background:#fbfbfb;box-shadow:inset 0 0 0 1px #e0e0e0;"></div>
<div class="t" style="top:226.71px;font-size:4.7px;color:#a8a8a8;left:256.4px;width:100px;text-align:center;">Apply</div>
<div class="a" style="left:0;top:1px;width:325px;height:236px">
<div class="t" style="top:29.47px;font-size:4.7px;color:#1e1e1e;left:6px;">Choose Commands From</div>
<div class="a" style="left:5px;top:37px;width:128px;height:164px;background:#e8e8e8;box-shadow:inset 0 0 0 1px #d0d0d0;"></div>
<div class="a" style="left:10px;top:40px;width:5px;height:5px;background:#e0e0e0;box-shadow:inset 0 0 0 1px #cdcdcd"></div>
<div class="a" style="left:11px;top:42px;width:3px;height:1px;background:#9fa3c6"></div>
<div class="a" style="left:12px;top:41px;width:1px;height:3px;background:#9fa3c6"></div>
<div class="t" style="top:41.56px;font-size:4.7px;color:#1e1e1e;left:19.8px;">Home</div>
<div class="a" style="left:10px;top:49px;width:5px;height:5px;background:#e0e0e0;box-shadow:inset 0 0 0 1px #cdcdcd"></div>
<div class="a" style="left:11px;top:51px;width:3px;height:1px;background:#9fa3c6"></div>
<div class="a" style="left:12px;top:50px;width:1px;height:3px;background:#9fa3c6"></div>
<div class="t" style="top:49.95px;font-size:4.7px;color:#1e1e1e;left:19.8px;">Insert</div>
<div class="a" style="left:10px;top:57px;width:5px;height:5px;background:#e0e0e0;box-shadow:inset 0 0 0 1px #cdcdcd"></div>
<div class="a" style="left:11px;top:59px;width:3px;height:1px;background:#9fa3c6"></div>
<div class="a" style="left:12px;top:58px;width:1px;height:3px;background:#9fa3c6"></div>
<div class="t" style="top:58.34px;font-size:4.7px;color:#1e1e1e;left:19.8px;">Questions</div>
<div class="a" style="left:10px;top:65px;width:5px;height:5px;background:#e0e0e0;box-shadow:inset 0 0 0 1px #cdcdcd"></div>
<div class="a" style="left:11px;top:67px;width:3px;height:1px;background:#9fa3c6"></div>
<div class="a" style="left:12px;top:66px;width:1px;height:3px;background:#9fa3c6"></div>
<div class="t" style="top:66.73px;font-size:4.7px;color:#1e1e1e;left:19.8px;">Design</div>
<div class="a" style="left:10px;top:74px;width:5px;height:5px;background:#e0e0e0;box-shadow:inset 0 0 0 1px #cdcdcd"></div>
<div class="a" style="left:11px;top:76px;width:3px;height:1px;background:#9fa3c6"></div>
<div class="a" style="left:12px;top:75px;width:1px;height:3px;background:#9fa3c6"></div>
<div class="t" style="top:75.12px;font-size:4.7px;color:#1e1e1e;left:19.8px;">Transitions</div>
<div class="a" style="left:10px;top:82px;width:5px;height:5px;background:#e0e0e0;box-shadow:inset 0 0 0 1px #cdcdcd"></div>
<div class="a" style="left:11px;top:84px;width:3px;height:1px;background:#9fa3c6"></div>
<div class="a" style="left:12px;top:83px;width:1px;height:3px;background:#9fa3c6"></div>
<div class="t" style="top:83.52px;font-size:4.7px;color:#1e1e1e;left:19.8px;">Animations</div>
<div class="a" style="left:10px;top:91px;width:5px;height:5px;background:#e0e0e0;box-shadow:inset 0 0 0 1px #cdcdcd"></div>
<div class="a" style="left:11px;top:93px;width:3px;height:1px;background:#9fa3c6"></div>
<div class="a" style="left:12px;top:92px;width:1px;height:3px;background:#9fa3c6"></div>
<div class="t" style="top:91.91px;font-size:4.7px;color:#1e1e1e;left:19.8px;">Export</div>
<div class="a" style="left:10px;top:99px;width:5px;height:5px;background:#e0e0e0;box-shadow:inset 0 0 0 1px #cdcdcd"></div>
<div class="a" style="left:11px;top:101px;width:3px;height:1px;background:#9fa3c6"></div>
<div class="a" style="left:12px;top:100px;width:1px;height:3px;background:#9fa3c6"></div>
<div class="t" style="top:100.30px;font-size:4.7px;color:#1e1e1e;left:19.8px;">View</div>
<div class="a" style="left:10px;top:107px;width:5px;height:5px;background:#e0e0e0;box-shadow:inset 0 0 0 1px #cdcdcd"></div>
<div class="a" style="left:11px;top:109px;width:3px;height:1px;background:#9fa3c6"></div>
<div class="a" style="left:12px;top:108px;width:1px;height:3px;background:#9fa3c6"></div>
<div class="t" style="top:108.69px;font-size:4.7px;color:#1e1e1e;left:19.8px;">Help</div>
<div class="a" style="left:10px;top:116px;width:5px;height:5px;background:#e0e0e0;box-shadow:inset 0 0 0 1px #cdcdcd"></div>
<div class="a" style="left:11px;top:118px;width:3px;height:1px;background:#9fa3c6"></div>
<div class="a" style="left:12px;top:117px;width:1px;height:3px;background:#9fa3c6"></div>
<div class="t" style="top:117.08px;font-size:4.7px;color:#1e1e1e;left:19.8px;">Slide Master</div>
<div class="a" style="left:10px;top:124px;width:5px;height:5px;background:#e0e0e0;box-shadow:inset 0 0 0 1px #cdcdcd"></div>
<div class="a" style="left:11px;top:126px;width:3px;height:1px;background:#9fa3c6"></div>
<div class="a" style="left:12px;top:125px;width:1px;height:3px;background:#9fa3c6"></div>
<div class="t" style="top:125.47px;font-size:4.7px;color:#1e1e1e;left:19.8px;">Feedback Master</div>
<div class="a" style="left:10px;top:132px;width:5px;height:5px;background:#e0e0e0;box-shadow:inset 0 0 0 1px #cdcdcd"></div>
<div class="a" style="left:11px;top:134px;width:3px;height:1px;background:#9fa3c6"></div>
<div class="a" style="left:12px;top:133px;width:1px;height:3px;background:#9fa3c6"></div>
<div class="t" style="top:133.85px;font-size:4.7px;color:#1e1e1e;left:19.8px;">Object Settings</div>
<div class="a" style="left:10px;top:141px;width:5px;height:5px;background:#e0e0e0;box-shadow:inset 0 0 0 1px #cdcdcd"></div>
<div class="a" style="left:11px;top:143px;width:3px;height:1px;background:#9fa3c6"></div>
<div class="a" style="left:12px;top:142px;width:1px;height:3px;background:#9fa3c6"></div>
<div class="t" style="top:142.24px;font-size:4.7px;color:#1e1e1e;left:19.8px;">Format</div>
<div class="a" style="left:10px;top:149px;width:5px;height:5px;background:#e0e0e0;box-shadow:inset 0 0 0 1px #cdcdcd"></div>
<div class="a" style="left:11px;top:151px;width:3px;height:1px;background:#9fa3c6"></div>
<div class="a" style="left:12px;top:150px;width:1px;height:3px;background:#9fa3c6"></div>
<div class="t" style="top:150.63px;font-size:4.7px;color:#1e1e1e;left:19.8px;">Equation</div>
<div class="a" style="left:10px;top:158px;width:5px;height:5px;background:#e0e0e0;box-shadow:inset 0 0 0 1px #cdcdcd"></div>
<div class="a" style="left:11px;top:160px;width:3px;height:1px;background:#9fa3c6"></div>
<div class="a" style="left:12px;top:159px;width:1px;height:3px;background:#9fa3c6"></div>
<div class="t" style="top:159.02px;font-size:4.7px;color:#1e1e1e;left:19.8px;">Drawing</div>
<div class="a" style="left:138px;top:108px;width:32px;height:10px;background:#fdfdfd;box-shadow:inset 0 0 0 1px #c2c2c2;"></div>
<div class="t" style="top:111.62px;font-size:4.7px;color:#1e1e1e;left:103.9px;width:100px;text-align:center;">Add &gt;&gt;</div>
<div class="a" style="left:137px;top:121px;width:35px;height:10px;background:#fbfbfb;box-shadow:inset 0 0 0 1px #e0e0e0;"></div>
<div class="t" style="top:125.02px;font-size:4.7px;color:#a8a8a8;left:104.30000000000001px;width:100px;text-align:center;">&lt;&lt; Remove</div>
<div class="t" style="top:29.06px;font-size:4.7px;color:#1e1e1e;left:176px;">Customized Toolbar</div>
<div class="a" style="left:175px;top:37px;width:133px;height:141px;background:#e8e8e8;box-shadow:inset 0 0 0 1px #d0d0d0;"></div>
<div class="a" style="left:180px;top:40px;width:5px;height:5px;background:#e0e0e0;box-shadow:inset 0 0 0 1px #cdcdcd"></div>
<div class="a" style="left:181px;top:42px;width:3px;height:1px;background:#9fa3c6"></div>
<div class="a" style="left:182px;top:41px;width:1px;height:3px;background:#9fa3c6"></div>
<div class="a" style="left:190px;top:40px;width:5px;height:5px;background:#fdfdfd;box-shadow:inset 0 0 0 1px #a0a0a0;"></div>
<svg class="a" style="left:189.5px;top:39.999999999999986px;overflow:visible" width="5.4" height="5.4" viewBox="0 0 10 10"><path d="M2 5.4 L4.3 7.9 L9.4 1.6" stroke="#2ea82e" stroke-width="1.9" fill="none"/></svg>
<div class="t" style="top:41.56px;font-size:4.7px;color:#1e1e1e;left:197.3px;">Home</div>
<div class="a" style="left:180px;top:49px;width:5px;height:5px;background:#e0e0e0;box-shadow:inset 0 0 0 1px #cdcdcd"></div>
<div class="a" style="left:181px;top:51px;width:3px;height:1px;background:#9fa3c6"></div>
<div class="a" style="left:182px;top:50px;width:1px;height:3px;background:#9fa3c6"></div>
<div class="a" style="left:190px;top:48px;width:5px;height:6px;background:#fdfdfd;box-shadow:inset 0 0 0 1px #a0a0a0;"></div>
<svg class="a" style="left:189.5px;top:48.389999999999986px;overflow:visible" width="5.4" height="5.4" viewBox="0 0 10 10"><path d="M2 5.4 L4.3 7.9 L9.4 1.6" stroke="#2ea82e" stroke-width="1.9" fill="none"/></svg>
<div class="t" style="top:49.95px;font-size:4.7px;color:#1e1e1e;left:197.3px;">Insert</div>
<div class="a" style="left:180px;top:57px;width:5px;height:5px;background:#e0e0e0;box-shadow:inset 0 0 0 1px #cdcdcd"></div>
<div class="a" style="left:181px;top:59px;width:3px;height:1px;background:#9fa3c6"></div>
<div class="a" style="left:182px;top:58px;width:1px;height:3px;background:#9fa3c6"></div>
<div class="a" style="left:190px;top:57px;width:5px;height:5px;background:#fdfdfd;box-shadow:inset 0 0 0 1px #a0a0a0;"></div>
<svg class="a" style="left:189.5px;top:56.77999999999999px;overflow:visible" width="5.4" height="5.4" viewBox="0 0 10 10"><path d="M2 5.4 L4.3 7.9 L9.4 1.6" stroke="#2ea82e" stroke-width="1.9" fill="none"/></svg>
<div class="t" style="top:58.34px;font-size:4.7px;color:#1e1e1e;left:197.3px;">Questions</div>
<div class="a" style="left:180px;top:65px;width:5px;height:5px;background:#e0e0e0;box-shadow:inset 0 0 0 1px #cdcdcd"></div>
<div class="a" style="left:181px;top:67px;width:3px;height:1px;background:#9fa3c6"></div>
<div class="a" style="left:182px;top:66px;width:1px;height:3px;background:#9fa3c6"></div>
<div class="a" style="left:190px;top:65px;width:5px;height:6px;background:#fdfdfd;box-shadow:inset 0 0 0 1px #a0a0a0;"></div>
<svg class="a" style="left:189.5px;top:65.16999999999999px;overflow:visible" width="5.4" height="5.4" viewBox="0 0 10 10"><path d="M2 5.4 L4.3 7.9 L9.4 1.6" stroke="#2ea82e" stroke-width="1.9" fill="none"/></svg>
<div class="t" style="top:66.73px;font-size:4.7px;color:#1e1e1e;left:197.3px;">Design</div>
<div class="a" style="left:180px;top:74px;width:5px;height:5px;background:#e0e0e0;box-shadow:inset 0 0 0 1px #cdcdcd"></div>
<div class="a" style="left:181px;top:76px;width:3px;height:1px;background:#9fa3c6"></div>
<div class="a" style="left:182px;top:75px;width:1px;height:3px;background:#9fa3c6"></div>
<div class="a" style="left:190px;top:74px;width:5px;height:5px;background:#fdfdfd;box-shadow:inset 0 0 0 1px #a0a0a0;"></div>
<svg class="a" style="left:189.5px;top:73.55999999999999px;overflow:visible" width="5.4" height="5.4" viewBox="0 0 10 10"><path d="M2 5.4 L4.3 7.9 L9.4 1.6" stroke="#2ea82e" stroke-width="1.9" fill="none"/></svg>
<div class="t" style="top:75.12px;font-size:4.7px;color:#1e1e1e;left:197.3px;">Transitions</div>
<div class="a" style="left:180px;top:82px;width:5px;height:5px;background:#e0e0e0;box-shadow:inset 0 0 0 1px #cdcdcd"></div>
<div class="a" style="left:181px;top:84px;width:3px;height:1px;background:#9fa3c6"></div>
<div class="a" style="left:182px;top:83px;width:1px;height:3px;background:#9fa3c6"></div>
<div class="a" style="left:190px;top:82px;width:5px;height:5px;background:#fdfdfd;box-shadow:inset 0 0 0 1px #a0a0a0;"></div>
<svg class="a" style="left:189.5px;top:81.94999999999999px;overflow:visible" width="5.4" height="5.4" viewBox="0 0 10 10"><path d="M2 5.4 L4.3 7.9 L9.4 1.6" stroke="#2ea82e" stroke-width="1.9" fill="none"/></svg>
<div class="t" style="top:83.52px;font-size:4.7px;color:#1e1e1e;left:197.3px;">Animations</div>
<div class="a" style="left:180px;top:91px;width:5px;height:5px;background:#e0e0e0;box-shadow:inset 0 0 0 1px #cdcdcd"></div>
<div class="a" style="left:181px;top:93px;width:3px;height:1px;background:#9fa3c6"></div>
<div class="a" style="left:182px;top:92px;width:1px;height:3px;background:#9fa3c6"></div>
<div class="a" style="left:190px;top:90px;width:5px;height:6px;background:#fdfdfd;box-shadow:inset 0 0 0 1px #a0a0a0;"></div>
<svg class="a" style="left:189.5px;top:90.33999999999999px;overflow:visible" width="5.4" height="5.4" viewBox="0 0 10 10"><path d="M2 5.4 L4.3 7.9 L9.4 1.6" stroke="#2ea82e" stroke-width="1.9" fill="none"/></svg>
<div class="t" style="top:91.91px;font-size:4.7px;color:#1e1e1e;left:197.3px;">Export</div>
<div class="a" style="left:180px;top:99px;width:5px;height:5px;background:#e0e0e0;box-shadow:inset 0 0 0 1px #cdcdcd"></div>
<div class="a" style="left:181px;top:101px;width:3px;height:1px;background:#9fa3c6"></div>
<div class="a" style="left:182px;top:100px;width:1px;height:3px;background:#9fa3c6"></div>
<div class="a" style="left:190px;top:99px;width:5px;height:5px;background:#fdfdfd;box-shadow:inset 0 0 0 1px #a0a0a0;"></div>
<svg class="a" style="left:189.5px;top:98.72999999999999px;overflow:visible" width="5.4" height="5.4" viewBox="0 0 10 10"><path d="M2 5.4 L4.3 7.9 L9.4 1.6" stroke="#2ea82e" stroke-width="1.9" fill="none"/></svg>
<div class="t" style="top:100.30px;font-size:4.7px;color:#1e1e1e;left:197.3px;">View</div>
<div class="a" style="left:180px;top:107px;width:5px;height:5px;background:#e0e0e0;box-shadow:inset 0 0 0 1px #cdcdcd"></div>
<div class="a" style="left:181px;top:109px;width:3px;height:1px;background:#9fa3c6"></div>
<div class="a" style="left:182px;top:108px;width:1px;height:3px;background:#9fa3c6"></div>
<div class="a" style="left:190px;top:107px;width:5px;height:6px;background:#fdfdfd;box-shadow:inset 0 0 0 1px #a0a0a0;"></div>
<svg class="a" style="left:189.5px;top:107.11999999999999px;overflow:visible" width="5.4" height="5.4" viewBox="0 0 10 10"><path d="M2 5.4 L4.3 7.9 L9.4 1.6" stroke="#2ea82e" stroke-width="1.9" fill="none"/></svg>
<div class="t" style="top:108.69px;font-size:4.7px;color:#1e1e1e;left:197.3px;">Help</div>
<div class="a" style="left:180px;top:116px;width:5px;height:5px;background:#e0e0e0;box-shadow:inset 0 0 0 1px #cdcdcd"></div>
<div class="a" style="left:181px;top:118px;width:3px;height:1px;background:#9fa3c6"></div>
<div class="a" style="left:182px;top:117px;width:1px;height:3px;background:#9fa3c6"></div>
<div class="a" style="left:190px;top:116px;width:5px;height:5px;background:#fdfdfd;box-shadow:inset 0 0 0 1px #a0a0a0;"></div>
<svg class="a" style="left:189.5px;top:115.50999999999999px;overflow:visible" width="5.4" height="5.4" viewBox="0 0 10 10"><path d="M2 5.4 L4.3 7.9 L9.4 1.6" stroke="#2ea82e" stroke-width="1.9" fill="none"/></svg>
<div class="t" style="top:117.08px;font-size:4.7px;color:#1e1e1e;left:197.3px;">Slide Master</div>
<div class="a" style="left:180px;top:124px;width:5px;height:5px;background:#e0e0e0;box-shadow:inset 0 0 0 1px #cdcdcd"></div>
<div class="a" style="left:181px;top:126px;width:3px;height:1px;background:#9fa3c6"></div>
<div class="a" style="left:182px;top:125px;width:1px;height:3px;background:#9fa3c6"></div>
<div class="a" style="left:190px;top:124px;width:5px;height:5px;background:#fdfdfd;box-shadow:inset 0 0 0 1px #a0a0a0;"></div>
<svg class="a" style="left:189.5px;top:123.89999999999999px;overflow:visible" width="5.4" height="5.4" viewBox="0 0 10 10"><path d="M2 5.4 L4.3 7.9 L9.4 1.6" stroke="#2ea82e" stroke-width="1.9" fill="none"/></svg>
<div class="t" style="top:125.47px;font-size:4.7px;color:#1e1e1e;left:197.3px;">Feedback Master</div>
<div class="a" style="left:180px;top:132px;width:5px;height:5px;background:#e0e0e0;box-shadow:inset 0 0 0 1px #cdcdcd"></div>
<div class="a" style="left:181px;top:134px;width:3px;height:1px;background:#9fa3c6"></div>
<div class="a" style="left:182px;top:133px;width:1px;height:3px;background:#9fa3c6"></div>
<div class="a" style="left:190px;top:132px;width:5px;height:6px;background:#fdfdfd;box-shadow:inset 0 0 0 1px #a0a0a0;"></div>
<svg class="a" style="left:189.5px;top:132.29000000000002px;overflow:visible" width="5.4" height="5.4" viewBox="0 0 10 10"><path d="M2 5.4 L4.3 7.9 L9.4 1.6" stroke="#2ea82e" stroke-width="1.9" fill="none"/></svg>
<div class="t" style="top:133.85px;font-size:4.7px;color:#1e1e1e;left:197.3px;">Object Settings</div>
<div class="a" style="left:180px;top:141px;width:5px;height:5px;background:#e0e0e0;box-shadow:inset 0 0 0 1px #cdcdcd"></div>
<div class="a" style="left:181px;top:143px;width:3px;height:1px;background:#9fa3c6"></div>
<div class="a" style="left:182px;top:142px;width:1px;height:3px;background:#9fa3c6"></div>
<div class="a" style="left:190px;top:141px;width:5px;height:5px;background:#fdfdfd;box-shadow:inset 0 0 0 1px #a0a0a0;"></div>
<svg class="a" style="left:189.5px;top:140.68px;overflow:visible" width="5.4" height="5.4" viewBox="0 0 10 10"><path d="M2 5.4 L4.3 7.9 L9.4 1.6" stroke="#2ea82e" stroke-width="1.9" fill="none"/></svg>
<div class="t" style="top:142.24px;font-size:4.7px;color:#1e1e1e;left:197.3px;">Format</div>
<div class="a" style="left:180px;top:149px;width:5px;height:5px;background:#e0e0e0;box-shadow:inset 0 0 0 1px #cdcdcd"></div>
<div class="a" style="left:181px;top:151px;width:3px;height:1px;background:#9fa3c6"></div>
<div class="a" style="left:182px;top:150px;width:1px;height:3px;background:#9fa3c6"></div>
<div class="a" style="left:190px;top:149px;width:5px;height:5px;background:#fdfdfd;box-shadow:inset 0 0 0 1px #a0a0a0;"></div>
<svg class="a" style="left:189.5px;top:149.07px;overflow:visible" width="5.4" height="5.4" viewBox="0 0 10 10"><path d="M2 5.4 L4.3 7.9 L9.4 1.6" stroke="#2ea82e" stroke-width="1.9" fill="none"/></svg>
<div class="t" style="top:150.63px;font-size:4.7px;color:#1e1e1e;left:197.3px;">Equation</div>
<div class="a" style="left:180px;top:158px;width:5px;height:5px;background:#e0e0e0;box-shadow:inset 0 0 0 1px #cdcdcd"></div>
<div class="a" style="left:181px;top:160px;width:3px;height:1px;background:#9fa3c6"></div>
<div class="a" style="left:182px;top:159px;width:1px;height:3px;background:#9fa3c6"></div>
<div class="a" style="left:190px;top:157px;width:5px;height:6px;background:#fdfdfd;box-shadow:inset 0 0 0 1px #a0a0a0;"></div>
<svg class="a" style="left:189.5px;top:157.46px;overflow:visible" width="5.4" height="5.4" viewBox="0 0 10 10"><path d="M2 5.4 L4.3 7.9 L9.4 1.6" stroke="#2ea82e" stroke-width="1.9" fill="none"/></svg>
<div class="t" style="top:159.02px;font-size:4.7px;color:#1e1e1e;left:197.3px;">Drawing</div>
<div class="a" style="left:311px;top:108px;width:11px;height:9px;background:#fcfcfc;box-shadow:inset 0 0 0 1px #e0e0e0;"></div>
<div class="a" style="left:311px;top:121px;width:11px;height:10px;background:#fcfcfc;box-shadow:inset 0 0 0 1px #e0e0e0;"></div>
<svg class="a" style="left:314px;top:109.5px" width="5" height="6" viewBox="0 0 5 6"><path d="M2.5 5.8 L2.5 2" stroke="#4a4a4a" stroke-width="1.1" fill="none"/><path d="M0.7 2.6 L2.5 0.2 L4.3 2.6 Z" fill="#4a4a4a"/></svg>
<svg class="a" style="left:314px;top:123.2px" width="5" height="6" viewBox="0 0 5 6"><path d="M2.5 0.2 L2.5 4" stroke="#4a4a4a" stroke-width="1.1" fill="none"/><path d="M0.7 3.4 L2.5 5.8 L4.3 3.4 Z" fill="#4a4a4a"/></svg>
<div class="a" style="left:176px;top:182px;width:5px;height:6px;background:#fdfdfd;box-shadow:inset 0 0 0 1px #d6d6d6;"></div>
<div class="t" style="top:183.86px;font-size:4.7px;color:#a8a8a8;left:183px;">Hide Command Labels</div>
<div class="a" style="left:176px;top:192px;width:32px;height:10px;background:#fdfdfd;box-shadow:inset 0 0 0 1px #c2c2c2;"></div>
<div class="t" style="top:195.76px;font-size:4.7px;color:#1e1e1e;left:141.6px;width:100px;text-align:center;">New Tab...</div>
<div class="a" style="left:210px;top:192px;width:37px;height:10px;background:#fbfbfb;box-shadow:inset 0 0 0 1px #e0e0e0;"></div>
<div class="t" style="top:195.76px;font-size:4.7px;color:#a8a8a8;left:178.3px;width:100px;text-align:center;">New Group...</div>
<div class="a" style="left:250px;top:192px;width:30px;height:10px;background:#fbfbfb;box-shadow:inset 0 0 0 1px #e0e0e0;"></div>
<div class="t" style="top:195.76px;font-size:4.7px;color:#a8a8a8;left:215.05px;width:100px;text-align:center;">Rename...</div>
<div class="a" style="left:277px;top:206px;width:45px;height:10px;background:#fdfdfd;box-shadow:inset 0 0 0 1px #c2c2c2;"></div>
<div class="t" style="top:209.51px;font-size:4.7px;color:#1e1e1e;left:249.45px;width:100px;text-align:center;">Restore Defaults</div>
</div>
<div class="a" style="left:0px;top:0px;width:325px;height:13px;background:#0b5fcd;"></div>
<div class="t" style="top:6.00px;font-size:4.45px;color:#cfe1f7;left:5px;-webkit-text-stroke:0.05px currentColor">Preferences</div>
<svg class="a" style="left:317.5px;top:4.8px" width="4.5" height="4.5" viewBox="0 0 10 10"><path d="M1 1 L9 9 M9 1 L1 9" stroke="#e4edf9" stroke-width="1.7"/></svg>
<div class="a" style="left:0px;top:234px;width:325px;height:1px;background:#5193da;"></div>
<div class="a" style="left:0px;top:235px;width:325px;height:1px;background:#047e7a;"></div>
</div>
<div class="a" style="left:325px;top:233px;width:325px;height:236px;overflow:hidden;background:#e9e9e9">
<div class="a" style="left:0px;top:0px;width:2px;height:236px;background:#5193da;"></div>
<div class="a" style="left:2px;top:13px;width:1px;height:223px;background:#f4f1ec;"></div>
<div class="a" style="left:2px;top:13px;width:323px;height:2px;background:#f4f1ec;"></div>
<div class="a" style="left:324px;top:13px;width:1px;height:223px;background:#f4f1ec;"></div>
<div class="a" style="left:2px;top:233px;width:323px;height:1px;background:#f4f1ec;"></div>
<div class="a" style="left:4px;top:16px;width:28px;height:10px;background:#e7e7e7;box-shadow:inset 0 0 0 1px #dadada;"></div>
<div class="t" style="top:19.66px;font-size:4.7px;color:#1e1e1e;left:-32.35px;width:100px;text-align:center;">General</div>
<div class="a" style="left:31px;top:16px;width:59px;height:10px;background:#e7e7e7;box-shadow:inset 0 0 0 1px #dadada;"></div>
<div class="t" style="top:19.66px;font-size:4.7px;color:#1e1e1e;left:10.149999999999999px;width:100px;text-align:center;">Auto Annotation Text</div>
<div class="a" style="left:89px;top:16px;width:30px;height:10px;background:#e7e7e7;box-shadow:inset 0 0 0 1px #dadada;"></div>
<div class="t" style="top:19.66px;font-size:4.7px;color:#1e1e1e;left:53.5px;width:100px;text-align:center;">Hotkeys</div>
<div class="a" style="left:118px;top:16px;width:28px;height:10px;background:#e7e7e7;box-shadow:inset 0 0 0 1px #dadada;"></div>
<div class="t" style="top:19.66px;font-size:4.7px;color:#1e1e1e;left:81.5px;width:100px;text-align:center;">Toolbar</div>
<div class="a" style="left:182px;top:16px;width:41px;height:10px;background:#e7e7e7;box-shadow:inset 0 0 0 1px #dadada;"></div>
<div class="t" style="top:19.66px;font-size:4.7px;color:#1e1e1e;left:152.35px;width:100px;text-align:center;">Miscellaneous</div>
<div class="a" style="left:4px;top:25px;width:320px;height:194px;background:#fbfbfb;box-shadow:inset 0 0 0 1px #d6d6d6;"></div>
<div class="a" style="left:145px;top:15px;width:38px;height:11px;background:#fbfbfb;"></div>
<div class="a" style="left:145px;top:15px;width:37.5px;height:1px;background:#d6d6d6;"></div>
<div class="a" style="left:145px;top:15px;width:1px;height:11px;background:#d6d6d6;"></div>
<div class="a" style="left:181.5px;top:15px;width:1.0px;height:11px;background:#d6d6d6;"></div>
<div class="t" style="top:19.66px;font-size:4.7px;color:#1e1e1e;font-weight:bold;left:113.5px;width:100px;text-align:center;">Script Editor</div>
<div class="a" style="left:222px;top:223px;width:31px;height:10px;background:#fdfdfd;box-shadow:inset 0 0 0 1px #c2c2c2;"></div>
<div class="t" style="top:226.71px;font-size:4.7px;color:#1e1e1e;left:187.8px;width:100px;text-align:center;">OK</div>
<div class="a" style="left:257px;top:223px;width:31px;height:10px;background:#fdfdfd;box-shadow:inset 0 0 0 1px #c2c2c2;"></div>
<div class="t" style="top:226.71px;font-size:4.7px;color:#1e1e1e;left:222.35000000000002px;width:100px;text-align:center;">Cancel</div>
<div class="a" style="left:291px;top:223px;width:31px;height:10px;background:#fbfbfb;box-shadow:inset 0 0 0 1px #e0e0e0;"></div>
<div class="t" style="top:226.71px;font-size:4.7px;color:#a8a8a8;left:256.4px;width:100px;text-align:center;">Apply</div>
<div class="a" style="left:0;top:1px;width:325px;height:236px">
<div class="a" style="left:6px;top:30px;width:83px;height:86px;box-shadow:inset 0 0 0 1px #dcdcdc;"></div>
<div class="t" style="left:9px;top:28.86px;font-size:4.7px;background:#fbfbfb;padding:0 1px;color:#1e1e1e">Color</div>
<div class="t" style="top:39.06px;font-size:4.7px;color:#1e1e1e;left:10px;">Instruction Key 1</div>
<div class="a" style="left:50px;top:36px;width:19px;height:9px;background:#fdfdfd;box-shadow:inset 0 0 0 1px #7393ea;"></div>
<div class="a" style="left:52px;top:38px;width:9px;height:5px;background:#0000ee;"></div>
<svg class="a" style="left:62.9px;top:38.999999999999986px" width="3" height="2" viewBox="0 0 3 2"><path d="M0 0 L3 0 L1.5 1.8 Z" fill="#222"/></svg>
<div class="t" style="top:52.62px;font-size:4.7px;color:#1e1e1e;left:10px;">Type Key</div>
<div class="a" style="left:50px;top:49px;width:19px;height:9px;background:#fdfdfd;box-shadow:inset 0 0 0 1px #c0c0c0;"></div>
<div class="a" style="left:52px;top:51px;width:9px;height:5px;background:#e43fd2;"></div>
<svg class="a" style="left:62.9px;top:52.55999999999999px" width="3" height="2" viewBox="0 0 3 2"><path d="M0 0 L3 0 L1.5 1.8 Z" fill="#222"/></svg>
<div class="t" style="top:66.19px;font-size:4.7px;color:#1e1e1e;left:10px;">Instruction Key 2</div>
<div class="a" style="left:50px;top:63px;width:19px;height:9px;background:#fdfdfd;box-shadow:inset 0 0 0 1px #c0c0c0;"></div>
<div class="a" style="left:52px;top:65px;width:9px;height:5px;background:#6e1a20;"></div>
<svg class="a" style="left:62.9px;top:66.11999999999999px" width="3" height="2" viewBox="0 0 3 2"><path d="M0 0 L3 0 L1.5 1.8 Z" fill="#222"/></svg>
<div class="t" style="top:79.75px;font-size:4.7px;color:#1e1e1e;left:10px;">String</div>
<div class="a" style="left:50px;top:76px;width:19px;height:9px;background:#fdfdfd;box-shadow:inset 0 0 0 1px #c0c0c0;"></div>
<div class="a" style="left:52px;top:78px;width:9px;height:5px;background:#f04a4a;"></div>
<svg class="a" style="left:62.9px;top:79.67999999999999px" width="3" height="2" viewBox="0 0 3 2"><path d="M0 0 L3 0 L1.5 1.8 Z" fill="#222"/></svg>
<div class="t" style="top:93.31px;font-size:4.7px;color:#1e1e1e;left:10px;">Number</div>
<div class="a" style="left:50px;top:90px;width:19px;height:9px;background:#fdfdfd;box-shadow:inset 0 0 0 1px #c0c0c0;"></div>
<div class="a" style="left:52px;top:92px;width:9px;height:5px;background:#151515;"></div>
<svg class="a" style="left:62.9px;top:93.24px" width="3" height="2" viewBox="0 0 3 2"><path d="M0 0 L3 0 L1.5 1.8 Z" fill="#222"/></svg>
<div class="t" style="top:106.86px;font-size:4.7px;color:#1e1e1e;left:10px;">Comment</div>
<div class="a" style="left:50px;top:103px;width:19px;height:9px;background:#fdfdfd;box-shadow:inset 0 0 0 1px #c0c0c0;"></div>
<div class="a" style="left:52px;top:105px;width:9px;height:5px;background:#1c6f2c;"></div>
<svg class="a" style="left:62.9px;top:106.79999999999998px" width="3" height="2" viewBox="0 0 3 2"><path d="M0 0 L3 0 L1.5 1.8 Z" fill="#222"/></svg>
<div class="a" style="left:92px;top:30px;width:54px;height:85px;box-shadow:inset 0 0 0 1px #dcdcdc;"></div>
<div class="t" style="left:94.2px;top:28.67px;font-size:4.7px;background:#fbfbfb;padding:0 1px;color:#1e1e1e">View</div>
<div class="a" style="left:96px;top:36px;width:5px;height:5px;background:#fdfdfd;box-shadow:inset 0 0 0 1px #b0b0b0;"></div>
<div class="t" style="top:37.37px;font-size:4.7px;color:#1e1e1e;left:103.1px;">Line Number</div>
<div class="a" style="left:96px;top:46px;width:5px;height:6px;background:#fdfdfd;box-shadow:inset 0 0 0 1px #b0b0b0;"></div>
<div class="t" style="top:47.76px;font-size:4.7px;color:#1e1e1e;left:103.1px;">View White Space</div>
<div class="a" style="left:96px;top:57px;width:5px;height:5px;background:#fdfdfd;box-shadow:inset 0 0 0 1px #b0b0b0;"></div>
<svg class="a" style="left:95.7px;top:56.699999999999974px;overflow:visible" width="5.4" height="5.4" viewBox="0 0 10 10"><path d="M1.8 5.2 L4.2 7.8 L8.6 2.2" stroke="#1a1a1a" stroke-width="2.0" fill="none"/></svg>
<div class="t" style="top:58.26px;font-size:4.7px;color:#1e1e1e;left:103.1px;">Auto Insert (), {}, []</div>
<div class="a" style="left:149px;top:30px;width:171px;height:85px;box-shadow:inset 0 0 0 1px #dcdcdc;"></div>
<div class="t" style="left:151.2px;top:29.17px;font-size:4.7px;background:#fbfbfb;padding:0 1px;color:#1e1e1e">Preview</div>
<div class="a" style="left:153px;top:36px;width:164px;height:76px;background:#ffffff;box-shadow:inset 0 0 0 1px #b2b2b2;"></div>
<div class="a" style="left:154px;top:37px;width:5px;height:5px;background:#f4f4f4;box-shadow:inset 0 0 0 1px #8a8a8a;"></div>
<div class="a" style="left:155.3px;top:39.2px;width:2.6999999999999886px;height:0.5999999999999943px;background:#666;"></div>
<div class="a" style="left:154px;top:56px;width:5px;height:5px;background:#f4f4f4;box-shadow:inset 0 0 0 1px #8a8a8a;"></div>
<div class="a" style="left:155.3px;top:58.39999999999999px;width:2.6999999999999886px;height:0.5999999999999943px;background:#666;"></div>
<div class="t" style="top:38.02px;font-size:5.32px;color:#1e1e1e;font-family:'Liberation Mono',monospace;left:160.4px;"><span style="color:#1b27d8">function</span><span style="color:#333333">&nbsp;untitledFunction(no_parameter)&nbsp;{</span></div>
<div class="t" style="top:44.42px;font-size:5.32px;color:#1e1e1e;font-family:'Liberation Mono',monospace;left:160.4px;"><span style="color:#333333">&nbsp;&nbsp;&nbsp;&nbsp;</span><span style="color:#1b27d8">var</span><span style="color:#333333">&nbsp;string&nbsp;=&nbsp;</span><span style="color:#ee2f2f">"this&nbsp;is&nbsp;a&nbsp;string"</span><span style="color:#333333">;</span></div>
<div class="t" style="top:50.82px;font-size:5.32px;color:#1e1e1e;font-family:'Liberation Mono',monospace;left:160.4px;"><span style="color:#333333">&nbsp;&nbsp;&nbsp;&nbsp;</span><span style="color:#1b27d8">var</span><span style="color:#333333">&nbsp;number&nbsp;=&nbsp;15;</span></div>
<div class="t" style="top:57.22px;font-size:5.32px;color:#1e1e1e;font-family:'Liberation Mono',monospace;left:160.4px;"><span style="color:#333333">&nbsp;&nbsp;&nbsp;&nbsp;</span><span style="color:#1b27d8">if</span><span style="color:#333333">&nbsp;(number&nbsp;==&nbsp;15)&nbsp;{</span></div>
<div class="t" style="top:63.62px;font-size:5.32px;color:#1e1e1e;font-family:'Liberation Mono',monospace;left:160.4px;"><span style="color:#1f9a2f">&nbsp;&nbsp;&nbsp;&nbsp;//&nbsp;this&nbsp;is&nbsp;a&nbsp;comment</span></div>
<div class="t" style="top:70.02px;font-size:5.32px;color:#1e1e1e;font-family:'Liberation Mono',monospace;left:160.4px;"><span style="color:#333333">&nbsp;&nbsp;&nbsp;&nbsp;&nbsp;&nbsp;&nbsp;&nbsp;number&nbsp;+=&nbsp;20;</span></div>
<div class="t" style="top:76.42px;font-size:5.32px;color:#1e1e1e;font-family:'Liberation Mono',monospace;left:160.4px;"><span style="color:#333333">&nbsp;&nbsp;&nbsp;&nbsp;&nbsp;&nbsp;&nbsp;&nbsp;console.log(number.</span><span style="color:#d93ad8">toString</span><span style="color:#333333">(2));</span></div>
<div class="t" style="top:82.82px;font-size:5.32px;color:#1e1e1e;font-family:'Liberation Mono',monospace;left:160.4px;"><span style="color:#333333">&nbsp;&nbsp;&nbsp;&nbsp;&nbsp;&nbsp;&nbsp;&nbsp;</span><span style="color:#d93ad8">alert</span><span style="color:#333333">(number);</span></div>
<div class="t" style="top:89.22px;font-size:5.32px;color:#1e1e1e;font-family:'Liberation Mono',monospace;left:160.4px;"><span style="color:#333333">&nbsp;&nbsp;&nbsp;&nbsp;}</span></div>
<div class="t" style="top:95.62px;font-size:5.32px;color:#1e1e1e;font-family:'Liberation Mono',monospace;left:160.4px;"><span style="color:#333333">}</span></div>
<div class="a" style="left:275px;top:119px;width:44px;height:10px;background:#fdfdfd;box-shadow:inset 0 0 0 1px #c2c2c2;"></div>
<div class="t" style="top:122.62px;font-size:4.7px;color:#1e1e1e;left:247.10000000000002px;width:100px;text-align:center;">Restore Defaults</div>
</div>
<div class="a" style="left:0px;top:0px;width:325px;height:13px;background:#0b5fcd;"></div>
<div class="a" style="left:0px;top:0px;width:2px;height:13px;background:#2a74d4;"></div>
<div class="t" style="top:6.00px;font-size:4.45px;color:#cfe1f7;left:5px;-webkit-text-stroke:0.05px currentColor">Preferences</div>
<svg class="a" style="left:317.5px;top:4.8px" width="4.5" height="4.5" viewBox="0 0 10 10"><path d="M1 1 L9 9 M9 1 L1 9" stroke="#e4edf9" stroke-width="1.7"/></svg>
<div class="a" style="left:0px;top:234px;width:325px;height:1px;background:#5193da;"></div>
<div class="a" style="left:0px;top:235px;width:325px;height:1px;background:#047e7a;"></div>
</div>
<div class="a" style="left:650px;top:233px;width:326px;height:236px;overflow:hidden;background:#e9e9e9">
<div class="a" style="left:0px;top:0px;width:2px;height:236px;background:#5193da;"></div>
<div class="a" style="left:2px;top:13px;width:1px;height:223px;background:#f4f1ec;"></div>
<div class="a" style="left:2px;top:13px;width:324px;height:2px;background:#f4f1ec;"></div>
<div class="a" style="left:325px;top:13px;width:1px;height:223px;background:#f4f1ec;"></div>
<div class="a" style="left:324px;top:0px;width:2px;height:236px;background:#5193da;"></div>
<div class="a" style="left:323px;top:13px;width:1px;height:223px;background:#f4f1ec;"></div>
<div class="a" style="left:2px;top:233px;width:324px;height:1px;background:#f4f1ec;"></div>
<div class="a" style="left:4px;top:16px;width:28px;height:10px;background:#e7e7e7;box-shadow:inset 0 0 0 1px #dadada;"></div>
<div class="t" style="top:19.66px;font-size:4.7px;color:#1e1e1e;left:-32.35px;width:100px;text-align:center;">General</div>
<div class="a" style="left:31px;top:16px;width:59px;height:10px;background:#e7e7e7;box-shadow:inset 0 0 0 1px #dadada;"></div>
<div class="t" style="top:19.66px;font-size:4.7px;color:#1e1e1e;left:10.149999999999999px;width:100px;text-align:center;">Auto Annotation Text</div>
<div class="a" style="left:89px;top:16px;width:30px;height:10px;background:#e7e7e7;box-shadow:inset 0 0 0 1px #dadada;"></div>
<div class="t" style="top:19.66px;font-size:4.7px;color:#1e1e1e;left:53.5px;width:100px;text-align:center;">Hotkeys</div>
<div class="a" style="left:118px;top:16px;width:28px;height:10px;background:#e7e7e7;box-shadow:inset 0 0 0 1px #dadada;"></div>
<div class="t" style="top:19.66px;font-size:4.7px;color:#1e1e1e;left:81.5px;width:100px;text-align:center;">Toolbar</div>
<div class="a" style="left:145px;top:16px;width:38px;height:10px;background:#e7e7e7;box-shadow:inset 0 0 0 1px #dadada;"></div>
<div class="t" style="top:19.66px;font-size:4.7px;color:#1e1e1e;left:113.5px;width:100px;text-align:center;">Script Editor</div>
<div class="a" style="left:4px;top:25px;width:320px;height:194px;background:#fbfbfb;box-shadow:inset 0 0 0 1px #d6d6d6;"></div>
<div class="a" style="left:182px;top:15px;width:41px;height:11px;background:#fbfbfb;"></div>
<div class="a" style="left:182px;top:15px;width:41.19999999999999px;height:1px;background:#d6d6d6;"></div>
<div class="a" style="left:182px;top:15px;width:1px;height:11px;background:#d6d6d6;"></div>
<div class="a" style="left:222.2px;top:15px;width:1.0px;height:11px;background:#d6d6d6;"></div>
<div class="t" style="top:19.66px;font-size:4.7px;color:#1e1e1e;font-weight:bold;left:152.35px;width:100px;text-align:center;">Miscellaneous</div>
<div class="a" style="left:222px;top:223px;width:31px;height:10px;background:#fdfdfd;box-shadow:inset 0 0 0 1px #c2c2c2;"></div>
<div class="t" style="top:226.71px;font-size:4.7px;color:#1e1e1e;left:187.8px;width:100px;text-align:center;">OK</div>
<div class="a" style="left:257px;top:223px;width:31px;height:10px;background:#fdfdfd;box-shadow:inset 0 0 0 1px #c2c2c2;"></div>
<div class="t" style="top:226.71px;font-size:4.7px;color:#1e1e1e;left:222.35000000000002px;width:100px;text-align:center;">Cancel</div>
<div class="a" style="left:291px;top:223px;width:31px;height:10px;background:#fbfbfb;box-shadow:inset 0 0 0 1px #e0e0e0;"></div>
<div class="t" style="top:226.71px;font-size:4.7px;color:#a8a8a8;left:256.4px;width:100px;text-align:center;">Apply</div>
<div class="a" style="left:0;top:1px;width:326px;height:236px">
<div class="a" style="left:5px;top:30px;width:316px;height:18px;box-shadow:inset 0 0 0 1px #dcdcdc;"></div>
<div class="t" style="left:8.6px;top:29.56px;font-size:4.7px;background:#fbfbfb;padding:0 1px;color:#1e1e1e">Automatic Updates</div>
<div class="a" style="left:10px;top:37px;width:5px;height:6px;background:#fdfdfd;box-shadow:inset 0 0 0 1px #7f9ff0;"></div>
<svg class="a" style="left:9.6px;top:37.499999999999986px;overflow:visible" width="5.4" height="5.4" viewBox="0 0 10 10"><path d="M1.8 5.2 L4.2 7.8 L8.6 2.2" stroke="#1a1a1a" stroke-width="2.0" fill="none"/></svg>
<div class="t" style="top:39.06px;font-size:4.7px;color:#1e1e1e;left:17px;">Automatically Check for Updates</div>
<div class="a" style="left:264px;top:36px;width:53px;height:9px;background:#fdfdfd;box-shadow:inset 0 0 0 1px #c2c2c2;"></div>
<div class="t" style="top:39.06px;font-size:4.7px;color:#1e1e1e;left:240.64999999999998px;width:100px;text-align:center;">Connection Settings</div>
<div class="a" style="left:5px;top:56px;width:316px;height:46px;box-shadow:inset 0 0 0 1px #dcdcdc;"></div>
<div class="t" style="left:8.6px;top:55.07px;font-size:4.7px;background:#fbfbfb;padding:0 1px;color:#1e1e1e">Log Settings</div>
<div class="a" style="left:10px;top:64px;width:5px;height:5px;background:#fdfdfd;box-shadow:inset 0 0 0 1px #b0b0b0;"></div>
<svg class="a" style="left:9.9px;top:63.699999999999974px;overflow:visible" width="5.4" height="5.4" viewBox="0 0 10 10"><path d="M1.8 5.2 L4.2 7.8 L8.6 2.2" stroke="#1a1a1a" stroke-width="2.0" fill="none"/></svg>
<div class="t" style="top:65.26px;font-size:4.7px;color:#1e1e1e;left:17px;">Enable Logging</div>
<div class="a" style="left:10px;top:77px;width:5px;height:6px;background:#fdfdfd;box-shadow:inset 0 0 0 1px #b0b0b0;"></div>
<div class="t" style="top:78.97px;font-size:4.7px;color:#1e1e1e;left:17px;">Verbose Mode</div>
<div class="a" style="left:10px;top:89px;width:31px;height:9px;background:#fdfdfd;box-shadow:inset 0 0 0 1px #c2c2c2;"></div>
<div class="t" style="top:92.37px;font-size:4.7px;color:#1e1e1e;left:-24.95px;width:100px;text-align:center;">View Log</div>
<div class="t" style="top:65.26px;font-size:4.7px;color:#1e1e1e;left:244.6px;">Log UI Level</div>
<div class="a" style="left:275px;top:62px;width:42px;height:9px;background:#fdfdfd;box-shadow:inset 0 0 0 1px #cecece;"></div>
<div class="t" style="top:65.16px;font-size:4.7px;color:#1e1e1e;left:276.9px;">Warning</div>
<svg class="a" style="left:311.70000000000005px;top:65.09999999999998px" width="4" height="3" viewBox="0 0 4 3"><path d="M0.9 0.8 L2 2.1 L3.1 0.8" stroke="#8c8c8c" stroke-width="0.8" fill="none"/></svg>
<div class="t" style="top:78.47px;font-size:4.7px;color:#1e1e1e;left:244.6px;">Log Level</div>
<div class="a" style="left:275px;top:75px;width:42px;height:9px;background:#fdfdfd;box-shadow:inset 0 0 0 1px #cecece;"></div>
<div class="t" style="top:78.51px;font-size:4.7px;color:#1e1e1e;left:276.9px;">Message</div>
<svg class="a" style="left:311.70000000000005px;top:78.44999999999997px" width="4" height="3" viewBox="0 0 4 3"><path d="M0.9 0.8 L2 2.1 L3.1 0.8" stroke="#8c8c8c" stroke-width="0.8" fill="none"/></svg>
<div class="a" style="left:5px;top:107px;width:316px;height:37px;box-shadow:inset 0 0 0 1px #dcdcdc;"></div>
<div class="t" style="left:8.6px;top:106.96px;font-size:4.7px;background:#fbfbfb;padding:0 1px;color:#1e1e1e">Confirmation Settings</div>
<div class="a" style="left:10px;top:114px;width:6px;height:5px;background:#fdfdfd;box-shadow:inset 0 0 0 1px #b0b0b0;"></div>
<svg class="a" style="left:10.2px;top:113.69999999999997px;overflow:visible" width="5.4" height="5.4" viewBox="0 0 10 10"><path d="M1.8 5.2 L4.2 7.8 L8.6 2.2" stroke="#1a1a1a" stroke-width="2.0" fill="none"/></svg>
<div class="t" style="top:115.26px;font-size:4.7px;color:#1e1e1e;left:17px;">Warning none-ANSI path when export</div>
<div class="a" style="left:10px;top:124px;width:6px;height:6px;background:#fdfdfd;box-shadow:inset 0 0 0 1px #b0b0b0;"></div>
<svg class="a" style="left:10.2px;top:124.3px;overflow:visible" width="5.4" height="5.4" viewBox="0 0 10 10"><path d="M1.8 5.2 L4.2 7.8 L8.6 2.2" stroke="#1a1a1a" stroke-width="2.0" fill="none"/></svg>
<div class="t" style="top:125.87px;font-size:4.7px;color:#1e1e1e;left:17px;">Show language confirmation when importing XLIFF</div>
<div class="t" style="top:136.36px;font-size:4.7px;color:#1e1e1e;left:9.6px;">Extend object duration to match the duration of generated audio</div>
<svg class="a" style="left:192.9px;top:134.60000000000002px" width="5.4" height="5.4" viewBox="0 0 10 10"><circle cx="5" cy="5" r="4.4" stroke="#6a6a6a" stroke-width="0.9" fill="#fdfdfd"/><circle cx="5" cy="5" r="2.2" fill="#222"/></svg>
<div class="t" style="top:136.16px;font-size:4.7px;color:#1e1e1e;left:200.9px;">Ask</div>
<svg class="a" style="left:235.7px;top:134.60000000000002px" width="5.4" height="5.4" viewBox="0 0 10 10"><circle cx="5" cy="5" r="4.4" stroke="#6a6a6a" stroke-width="0.9" fill="#fdfdfd"/></svg>
<div class="t" style="top:136.16px;font-size:4.7px;color:#1e1e1e;left:242.9px;">Yes</div>
<svg class="a" style="left:278px;top:134.60000000000002px" width="5.4" height="5.4" viewBox="0 0 10 10"><circle cx="5" cy="5" r="4.4" stroke="#6a6a6a" stroke-width="0.9" fill="#fdfdfd"/></svg>
<div class="t" style="top:136.16px;font-size:4.7px;color:#1e1e1e;left:285.1px;">No</div>
<div class="a" style="left:5px;top:150px;width:316px;height:19px;box-shadow:inset 0 0 0 1px #dcdcdc;"></div>
<div class="t" style="left:8.6px;top:149.36px;font-size:4.7px;background:#fbfbfb;padding:0 1px;color:#1e1e1e">Save external resource</div>
<div class="t" style="top:158.97px;font-size:4.7px;color:#1e1e1e;left:9.6px;">Link resources with file size greater than</div>
<div class="a" style="left:102px;top:155px;width:53px;height:10px;background:#fdfdfd;box-shadow:inset 0 0 0 1px #cecece;"></div>
<div class="t" style="top:158.91px;font-size:4.7px;color:#1e1e1e;left:103.9px;">50</div>
<svg class="a" style="left:149.5px;top:156.04999999999998px" width="4" height="8" viewBox="0 0 4 8"><path d="M0.6 3.3 L2 1.4 L3.4 3.3 Z M0.6 4.7 L2 6.6 L3.4 4.7 Z" fill="#9c9c9c"/></svg>
<div class="t" style="top:158.97px;font-size:4.7px;color:#1e1e1e;left:162.9px;">MB</div>
<div class="a" style="left:6px;top:173px;width:5px;height:5px;background:#fdfdfd;box-shadow:inset 0 0 0 1px #b0b0b0;"></div>
<div class="t" style="top:174.47px;font-size:4.7px;color:#1e1e1e;left:12.8px;">Use software rendering instead of GPU rendering (takes effect from the next run)</div>
<div class="a" style="left:6px;top:184px;width:5px;height:5px;background:#fdfdfd;box-shadow:inset 0 0 0 1px #b0b0b0;"></div>
<div class="t" style="top:185.16px;font-size:4.7px;color:#1e1e1e;left:12.8px;">Use Direct3D for recording screen</div>
<div class="a" style="left:6px;top:194px;width:5px;height:5px;background:#fdfdfd;box-shadow:inset 0 0 0 1px #b0b0b0;"></div>
<svg class="a" style="left:6px;top:193.60000000000002px;overflow:visible" width="5.4" height="5.4" viewBox="0 0 10 10"><path d="M1.8 5.2 L4.2 7.8 L8.6 2.2" stroke="#1a1a1a" stroke-width="2.0" fill="none"/></svg>
<div class="t" style="top:195.16px;font-size:4.7px;color:#1e1e1e;left:12.8px;">Use JPEG color range (full range) when exporting video</div>
<div class="a" style="left:277px;top:203px;width:44px;height:11px;background:#fdfdfd;box-shadow:inset 0 0 0 1px #c2c2c2;"></div>
<div class="t" style="top:207.46px;font-size:4.7px;color:#1e1e1e;left:249.0px;width:100px;text-align:center;">Restore Defaults</div>
</div>
<div class="a" style="left:0px;top:0px;width:326px;height:13px;background:#0b5fcd;"></div>
<div class="a" style="left:0px;top:0px;width:2px;height:13px;background:#2a74d4;"></div>
<div class="t" style="top:6.00px;font-size:4.45px;color:#cfe1f7;left:5px;-webkit-text-stroke:0.05px currentColor">Preferences</div>
<svg class="a" style="left:317.5px;top:4.8px" width="4.5" height="4.5" viewBox="0 0 10 10"><path d="M1 1 L9 9 M9 1 L1 9" stroke="#e4edf9" stroke-width="1.7"/></svg>
<div class="a" style="left:0px;top:234px;width:326px;height:1px;background:#5193da;"></div>
<div class="a" style="left:0px;top:235px;width:326px;height:1px;background:#047e7a;"></div>
</div>
</body></html>
